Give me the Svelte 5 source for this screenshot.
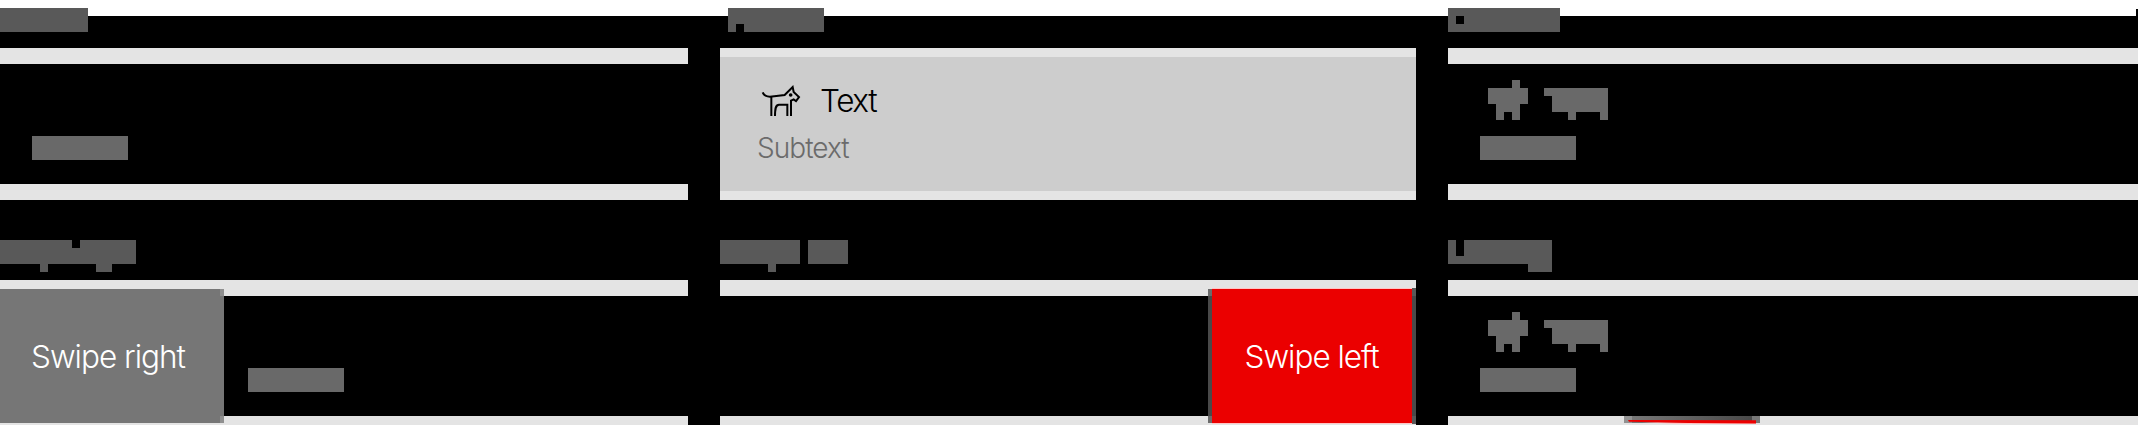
<script>
  const U = 8;
  const bar = (w) => [[0, 0, w, 3]];
  const shapes = {
    normal: bar(11),
    pressed: [[0, 0, 12, 2], [0, 2, 1, 1], [2, 2, 10, 1]],
    disabled: [[0, 0, 14, 1], [0, 1, 1, 1], [2, 1, 12, 1], [0, 2, 14, 1]],
    right: [[0, 0, 9, 1], [10, 0, 7, 1], [0, 1, 17, 2], [5, 3, 1, 1], [12, 3, 2, 1]],
    left: [[0, 0, 10, 3], [11, 0, 5, 3], [6, 3, 1, 1]],
    loading: [[0, 0, 1, 2], [2, 0, 11, 2], [0, 2, 13, 1], [10, 3, 3, 1]],
    subtext: bar(12),
    dog: [[3, 0, 1, 1], [0, 1, 5, 2], [1, 3, 3, 1], [1, 4, 1, 1], [3, 4, 1, 1]],
    text: [[0, 0, 8, 1], [1, 1, 7, 2], [3, 3, 1, 1], [7, 3, 1, 1]]
  };
  const width = (s) => Math.max(...s.map(([x, , w]) => x + w)) * U;
  const height = (s) => Math.max(...s.map(([, y, , h]) => y + h)) * U;
</script>

{#snippet blocks(name)}
  {@const s = shapes[name]}
  <svg class="blocks" width={width(s)} height={height(s)} shape-rendering="crispEdges" aria-hidden="true">
    {#each s as [x, y, w, h]}
      <rect x={x * U} y={y * U} width={w * U} height={h * U} />
    {/each}
  </svg>
{/snippet}

{#snippet blockRow()}
  <div class="row-content">
    <div class="row-title">{@render blocks('dog')}<div class="row-text">{@render blocks('text')}</div></div>
    {@render blocks('subtext')}
  </div>
{/snippet}

<main>
  <section>
    <header>{@render blocks('normal')}</header>
    <div class="card">
      <div class="sub-only">{@render blocks('subtext')}</div>
    </div>
  </section>

  <section>
    <header class="indent">{@render blocks('pressed')}</header>
    <div class="card">
      <div class="pressed">
        <div class="title">
          <svg class="icon" width="41" height="33" viewBox="60 42 123 99" aria-hidden="true">
            <path d="M68 67Q73 80 90 80L134 75L158 51L161 66L177 81L168 93L161 88L153 92V138M94 80V138M105 138C105 112 108 104 117 104H142V138" />
            <circle cx="152" cy="75" r="5.5" />
          </svg>
          <span>Text</span>
        </div>
        <div class="subtitle">Subtext</div>
      </div>
    </div>
  </section>

  <section>
    <header>{@render blocks('disabled')}</header>
    <div class="card">{@render blockRow()}</div>
    <i class="corner"></i>
  </section>

  <section>
    <header>{@render blocks('right')}</header>
    <div class="card swipe">
      <div class="action gray"><span>Swipe right</span></div>
      <i class="edge light"></i>
      <div class="shifted">{@render blocks('subtext')}</div>
    </div>
  </section>

  <section>
    <header>{@render blocks('left')}</header>
    <div class="card swipe end">
      <i class="edge"></i>
      <div class="action red"><span>Swipe left</span></div>
      <i class="edge tall"></i>
    </div>
  </section>

  <section>
    <header>{@render blocks('loading')}</header>
    <div class="card">
      {@render blockRow()}
      <svg class="progress" width="136" height="9" viewBox="0 0 136 9" aria-hidden="true">
        <defs>
          <linearGradient id="shade"><stop stop-color="#777" /><stop offset="1" stop-color="#494949" /></linearGradient>
        </defs>
        <path fill="#929292" d="M0 0H8V7H0Z" />
        <path fill="url(#shade)" d="M8 0H128V7H8Z" />
        <path fill="#777" d="M128 0H136V7H128Z" />
        <path fill="#ffc5c5" d="M18 6L132 7V8H50Z" />
        <path fill="#eb0000" d="M4 4L132 4.3V7.5L64 7L5 5.8Z" />
      </svg>
    </div>
  </section>
</main>

<style>
  :global(body) {
    margin: 0;
    overflow: hidden;
    background: #000;
  }
  main {
    box-sizing: border-box;
    width: 2138px;
    height: 425px;
    overflow: hidden;
    display: grid;
    grid-template-columns: 688px 696px 690px;
    grid-auto-rows: 200px;
    gap: 32px;
    background: linear-gradient(#fff 16px, #000 16px);
    font-family: Inter, 'Liberation Sans', sans-serif;
    font-weight: 300;
  }
  section {
    position: relative;
  }
  header {
    box-sizing: border-box;
    height: 48px;
    padding-top: 8px;
  }
  header.indent {
    padding-left: 8px;
  }
  .blocks {
    display: block;
    fill: #696969;
  }
  header .blocks {
    fill: #595959;
  }
  .card {
    position: relative;
    box-sizing: border-box;
    height: 152px;
    border: solid #e4e4e4;
    border-width: 16px 0;
  }
  .sub-only {
    padding: 72px 32px 0;
  }
  .row-content {
    padding: 16px 32px 0;
  }
  .row-title {
    display: flex;
    height: 56px;
    padding-left: 8px;
    gap: 16px;
  }
  .row-text {
    padding-top: 8px;
  }
  .pressed {
    box-sizing: border-box;
    height: 134px;
    margin-top: -7px;
    padding: 24px 37px 0;
    background: #cdcdcd;
  }
  .title {
    display: flex;
    height: 42px;
    padding: 3px 0 0 3px;
    gap: 19px;
    font-size: 31.5px;
    line-height: 33px;
    letter-spacing: -1.4px;
    color: #000;
  }
  .icon {
    stroke: #000;
    stroke-width: 6;
    fill: none;
  }
  .icon circle {
    fill: #000;
    stroke: none;
  }
  .subtitle {
    margin-top: 5px;
    font-size: 28px;
    line-height: 34px;
    letter-spacing: -0.95px;
    color: #6b6b6b;
  }
  .swipe {
    display: flex;
  }
  .end {
    justify-content: flex-end;
  }
  .action {
    box-sizing: border-box;
    height: 134px;
    margin-top: -7px;
    display: flex;
    align-items: center;
    padding: 2px 0 0 31px;
    font-size: 31.5px;
    line-height: 40px;
    letter-spacing: -1px;
    color: #fff;
    white-space: nowrap;
  }
  .gray {
    width: 220px;
    background: #767676;
  }
  .red {
    width: 200px;
    padding-left: 32.5px;
    background: #eb0000;
    box-shadow: 0 -1px #ffc5c5, 0 1px #ffc5c5;
  }
  .edge {
    width: 4px;
    height: 134px;
    margin-top: -7px;
    background: linear-gradient(#6b6b6b 7px, #494949 7px 127px, #6b6b6b 127px);
  }
  .edge.light {
    background: linear-gradient(#8f8f8f 7px, #767676 7px 127px, #8f8f8f 127px);
  }
  .edge.tall {
    height: 136px;
    margin-top: -8px;
    background: linear-gradient(#595959 8px, #494949 8px 128px, #595959 128px);
  }
  .shifted {
    padding: 72px 0 0 24px;
  }
  .progress {
    position: absolute;
    left: 176px;
    top: 120px;
  }
  .corner {
    position: absolute;
    top: 9px;
    right: 0;
    width: 2px;
    height: 7px;
    background: #000;
  }
</style>
